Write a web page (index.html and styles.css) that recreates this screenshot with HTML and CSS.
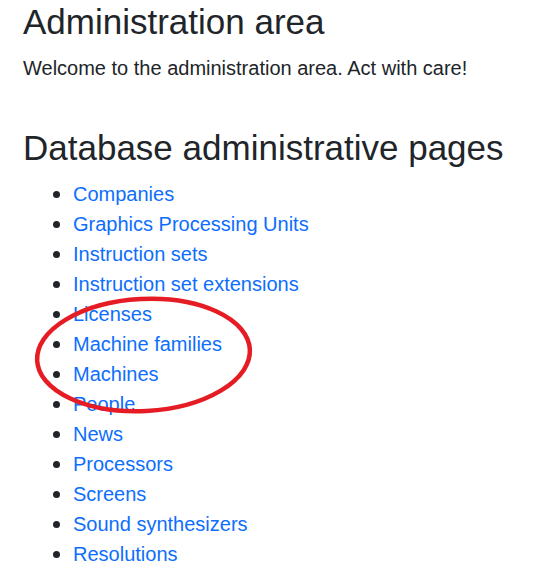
FILE: index.html
```html
<!DOCTYPE html>
<html>
<head>
<meta charset="utf-8">
<link rel="stylesheet" href="styles.css">
</head>
<body>
<main class="page">
  <h1 class="title">Administration area</h1>
  <p class="lead">Welcome to the administration area. Act with care!</p>
  <h1 class="title section">Database administrative pages</h1>
  <ul class="links">
    <li><a href="#">Companies</a></li>
    <li><a href="#">Graphics Processing Units</a></li>
    <li><a href="#">Instruction sets</a></li>
    <li><a href="#">Instruction set extensions</a></li>
    <li><a href="#">Licenses</a></li>
    <li><a href="#">Machine families</a></li>
    <li><a href="#">Machines</a></li>
    <li><a href="#">People</a></li>
    <li><a href="#">News</a></li>
    <li><a href="#">Processors</a></li>
    <li><a href="#">Screens</a></li>
    <li><a href="#">Sound synthesizers</a></li>
    <li><a href="#">Resolutions</a></li>
  </ul>
  <svg class="mark" width="533" height="586" viewBox="0 0 533 586">
    <ellipse cx="143.5" cy="355" rx="106.5" ry="56" transform="rotate(-3 143.5 355)" fill="none" stroke="#e51c24" stroke-width="4.5"/>
  </svg>
</main>
</body>
</html>
```
FILE: styles.css
```css
html, body {
  margin: 0;
  padding: 0;
  background: #fff;
}
body {
  font-family: "Liberation Sans", Arial, sans-serif;
  font-size: 20px;
  line-height: 1.5;
  color: #212529;
}
.page {
  position: relative;
  padding: 1px 0 0 23px;
  height: 585px;
  overflow: hidden;
}
.title {
  font-size: 35px;
  font-weight: 400;
  line-height: 1.2;
  margin: 0 0 10px 0;
}
.title.section {
  margin-top: 44px;
}
.lead {
  margin: 0 0 20px 0;
}
.links {
  margin: 0;
  padding-left: 50px;
}
.links li {
  height: 30px;
  line-height: 30px;
}
.links li::marker {
  font-size: 22px;
}
.links a {
  color: #0d6efd;
  text-decoration: none;
}
.mark {
  position: absolute;
  left: 0;
  top: 0;
  pointer-events: none;
}
```
